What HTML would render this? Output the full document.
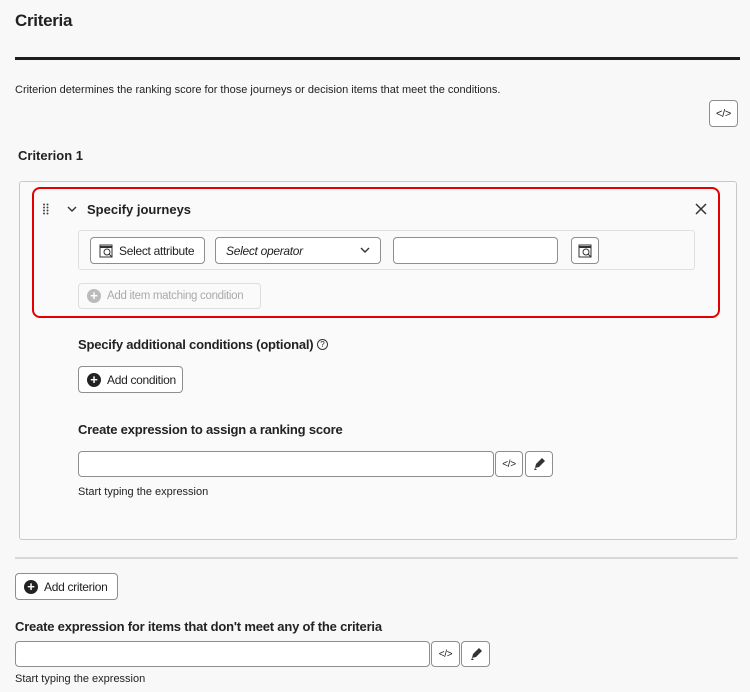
<!DOCTYPE html><html><head><style>
*{box-sizing:border-box;margin:0;padding:0}
body{width:750px;height:692px;background:#f8f8f8;font-family:"Liberation Sans",sans-serif;color:#222;position:relative;overflow:hidden}
.a{position:absolute}
.b{font-weight:bold}
.btn{position:absolute;border:1px solid #8e8e8e;border-radius:4px;background:#fff;font-size:12px;letter-spacing:-0.3px;display:flex;align-items:center;color:#222;white-space:nowrap}
.inp{position:absolute;border:1px solid #8e8e8e;border-radius:4px;background:#fff}
.plus{width:14px;height:14px;border-radius:50%;background:#222;color:#fff;font-size:13px;line-height:14px;text-align:center;font-weight:bold;margin:0 6px 0 8px;letter-spacing:0}
.sm{font-size:11px}
</style></head><body>
<div class="a b" style="left:15px;top:11px;font-size:17px;letter-spacing:-0.3px">Criteria</div>
<div class="a" style="left:15px;top:57px;width:725px;height:3px;background:#1e1e1e"></div>
<div class="a sm" style="left:15px;top:84px">Criterion determines the ranking score for those journeys or decision items that meet the conditions.</div>
<div class="btn" style="left:709px;top:100px;width:29px;height:27px;justify-content:center;font-size:11px">&lt;/&gt;</div>
<div class="a b" style="left:18px;top:148px;font-size:13px">Criterion 1</div>
<div class="a" style="left:19px;top:181px;width:718px;height:359px;border:1px solid #c8c8c8;border-radius:3px;background:#fafafa"></div>
<div class="a" style="left:32px;top:187px;width:688px;height:131px;border:2px solid #e30000;border-radius:8px"></div>
<svg class="a" style="left:42px;top:203px" width="8" height="13"><g fill="#444"><circle cx="2" cy="1.5" r="1"/><circle cx="5.5" cy="1.5" r="1"/><circle cx="2" cy="4.5" r="1"/><circle cx="5.5" cy="4.5" r="1"/><circle cx="2" cy="7.5" r="1"/><circle cx="5.5" cy="7.5" r="1"/><circle cx="2" cy="10.5" r="1"/><circle cx="5.5" cy="10.5" r="1"/></g></svg>
<svg class="a" style="left:67px;top:205px" width="10" height="8"><path d="M1 2l4 4 4-4" stroke="#333" stroke-width="1.4" fill="none"/></svg>
<div class="a b" style="left:87px;top:202px;font-size:13px">Specify journeys</div>
<svg class="a" style="left:695px;top:203px" width="12" height="12"><path d="M1 1l10 10M11 1L1 11" stroke="#333" stroke-width="1.5"/></svg>
<div class="a" style="left:78px;top:230px;width:617px;height:40px;border:1px solid #e0e0e0;border-radius:3px;background:#fafafa"></div>
<div class="btn" style="left:90px;top:237px;width:115px;height:27px"><svg style="margin:0 6px 0 8px" width="14" height="14"><rect x="1" y="1" width="12" height="12" fill="none" stroke="#333"/><line x1="1" y1="3" x2="13" y2="3" stroke="#333" stroke-width="2"/><circle cx="8" cy="8" r="3" fill="none" stroke="#333"/><path d="M10 10l3 3" stroke="#333"/></svg>Select attribute</div>
<div class="btn" style="left:215px;top:237px;width:166px;height:27px;padding-left:10px;font-style:italic;justify-content:space-between;padding-right:10px">Select operator<svg width="10" height="7"><path d="M1 1l4 4 4-4" stroke="#333" stroke-width="1.4" fill="none"/></svg></div>
<div class="inp" style="left:393px;top:237px;width:165px;height:27px"></div>
<div class="btn" style="left:571px;top:237px;width:28px;height:27px;justify-content:center"><svg width="14" height="14"><rect x="1" y="1" width="12" height="12" fill="none" stroke="#333"/><line x1="1" y1="3" x2="13" y2="3" stroke="#333" stroke-width="2"/><circle cx="8" cy="8" r="3" fill="none" stroke="#333"/><path d="M10 10l3 3" stroke="#333"/></svg></div>
<div class="btn" style="left:78px;top:283px;width:183px;height:26px;border-color:#ddd;color:#aaa;background:#fafafa;font-size:11.5px"><span class="plus" style="background:#bbb">+</span>Add item matching condition</div>
<div class="a b" style="left:78px;top:337px;font-size:13px;letter-spacing:-0.2px">Specify additional conditions (optional) <span style="font-weight:normal;display:inline-block;width:11px;height:11px;border:1px solid #333;border-radius:50%;line-height:9px;text-align:center;font-size:8px;vertical-align:2px">?</span></div>
<div class="btn" style="left:78px;top:366px;width:105px;height:27px"><span class="plus">+</span>Add condition</div>
<div class="a b" style="left:78px;top:422px;font-size:13px;letter-spacing:-0.2px">Create expression to assign a ranking score</div>
<div class="inp" style="left:78px;top:451px;width:416px;height:26px"></div>
<div class="btn" style="left:495px;top:451px;width:28px;height:26px;justify-content:center;font-size:10px">&lt;/&gt;</div>
<div class="btn" style="left:525px;top:451px;width:28px;height:26px;justify-content:center"><svg width="14" height="14"><path d="M3 11l1-4 6-6 3 3-6 6z" fill="#333"/><path d="M2 13l1-2 2 2z" fill="#333"/></svg></div>
<div class="a sm" style="left:78px;top:486px">Start typing the expression</div>
<div class="a" style="left:15px;top:557px;width:723px;height:2px;background:#d8d8d8"></div>
<div class="btn" style="left:15px;top:573px;width:103px;height:27px"><span class="plus">+</span>Add criterion</div>
<div class="a b" style="left:15px;top:619px;font-size:13px;letter-spacing:-0.2px">Create expression for items that don't meet any of the criteria</div>
<div class="inp" style="left:15px;top:641px;width:415px;height:26px"></div>
<div class="btn" style="left:431px;top:641px;width:29px;height:26px;justify-content:center;font-size:10px">&lt;/&gt;</div>
<div class="btn" style="left:461px;top:641px;width:29px;height:26px;justify-content:center"><svg width="14" height="14"><path d="M3 11l1-4 6-6 3 3-6 6z" fill="#333"/><path d="M2 13l1-2 2 2z" fill="#333"/></svg></div>
<div class="a sm" style="left:15px;top:673px">Start typing the expression</div>
</body></html>
